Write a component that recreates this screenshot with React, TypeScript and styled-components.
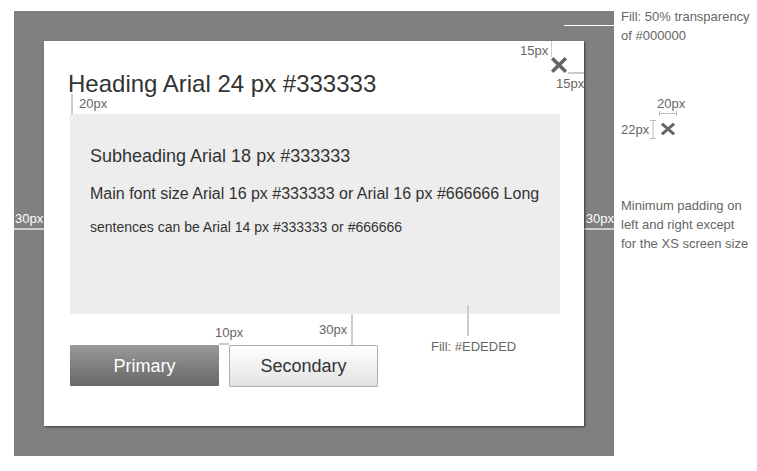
import React from "react";
import styled, { createGlobalStyle } from "styled-components";

const GlobalStyle = createGlobalStyle`
  html, body { margin: 0; padding: 0; background: #ffffff; }
  body { font-family: "Liberation Sans", Arial, sans-serif; }
`;

const Page = styled.div`
  display: flex;
  align-items: flex-start;
  padding: 7px 0 0 14px;
`;

const Overlay = styled.div`
  position: relative;
  margin-top: 4px;
  width: 600px;
  height: 445px;
  padding: 30px;
  box-sizing: border-box;
  background: #808080;
  flex-shrink: 0;
`;

const Modal = styled.div`
  position: relative;
  width: 540px;
  height: 385px;
  box-sizing: border-box;
  padding: 29px 24px 0 26px;
  background: #ffffff;
  box-shadow: 1px 1px 2px rgba(0, 0, 0, 0.55);
`;

const Heading = styled.h1`
  margin: 0 0 16px -2px;
  font-size: 24px;
  font-weight: normal;
  line-height: 28px;
  color: #333333;
`;

const ContentBox = styled.div`
  width: 490px;
  height: 200px;
  box-sizing: border-box;
  padding: 31px 20px 0 20px;
  background: #ededed;
`;

const Subheading = styled.h2`
  margin: 0;
  font-size: 18px;
  font-weight: normal;
  line-height: 22px;
  color: #333333;
`;

const MainText = styled.p`
  margin: 17px 0 0;
  font-size: 16px;
  line-height: 20px;
  color: #333333;
  white-space: nowrap;
`;

const SmallText = styled.p`
  margin: 15px 0 0;
  font-size: 14px;
  line-height: 17px;
  color: #333333;
  white-space: nowrap;
`;

const ButtonRow = styled.div`
  display: flex;
  align-items: flex-start;
  gap: 10px;
  margin-top: 31px;
`;

const Button = styled.button<{ $variant: "primary" | "secondary" }>`
  width: 149px;
  box-sizing: border-box;
  margin: 0;
  padding: 0;
  font-family: "Liberation Sans", Arial, sans-serif;
  font-size: 18px;
  line-height: 20px;
  border-radius: 1px;
  cursor: pointer;
  ${({ $variant }) =>
    $variant === "primary"
      ? `
    height: 41px;
    border: none;
    color: #ffffff;
    background: linear-gradient(to bottom, #9a9a9a 0%, #676767 100%);
  `
      : `
    height: 42px;
    border: 1px solid #b0b0b0;
    color: #333333;
    background: linear-gradient(to bottom, #ffffff 0%, #e2e2e2 100%);
  `}
`;

/* ---------- annotation markers laid over the mock-up ---------- */

const Marker = styled.div<{
  $top: number;
  $left: number;
  $dir?: "row" | "column";
  $align?: string;
  $gap?: number;
}>`
  position: absolute;
  top: ${({ $top }) => $top}px;
  left: ${({ $left }) => $left}px;
  display: flex;
  flex-direction: ${({ $dir }) => $dir ?? "row"};
  align-items: ${({ $align }) => $align ?? "flex-start"};
  gap: ${({ $gap }) => $gap ?? 0}px;
`;

const MarkLabel = styled.span<{ $light?: boolean; $offset?: number; $indent?: number }>`
  margin-top: ${({ $offset }) => $offset ?? 0}px;
  margin-left: ${({ $indent }) => $indent ?? 0}px;
  font-size: 13px;
  line-height: 15px;
  white-space: nowrap;
  color: ${({ $light }) => ($light ? "#ffffff" : "#666666")};
`;

const MarkLine = styled.div<{ $w: number; $h: number; $white?: boolean; $indent?: number }>`
  width: ${({ $w }) => $w}px;
  height: ${({ $h }) => $h}px;
  margin-left: ${({ $indent }) => $indent ?? 0}px;
  flex-shrink: 0;
  background: ${({ $white }) => ($white ? "#ffffff" : "#cccccc")};
`;

const CloseButton = styled.button`
  position: absolute;
  top: 15px;
  right: 16px;
  width: 18px;
  height: 18px;
  padding: 0;
  border: none;
  background: transparent;
  display: flex;
  cursor: pointer;
`;

/* ---------- notes column on the right ---------- */

const Notes = styled.div`
  display: flex;
  flex-direction: column;
  margin-left: 7px;
  font-size: 13px;
  line-height: 19px;
  color: #666666;
`;

const NoteText = styled.div<{ $mt?: number }>`
  margin-top: ${({ $mt }) => $mt ?? 0}px;
  white-space: nowrap;
`;

const CloseSpec = styled.div`
  display: grid;
  grid-template-columns: 28px 9px 20px;
  grid-template-rows: 15px 7px 22px;
  margin-top: 51px;
  font-size: 13px;
  line-height: 15px;
  color: #666666;
`;

const SpecWidthLabel = styled.span`
  grid-column: 3;
  grid-row: 1;
  margin-left: -1px;
  white-space: nowrap;
`;

const SpecHeightLabel = styled.span`
  grid-column: 1;
  grid-row: 3;
  align-self: center;
  white-space: nowrap;
`;

const SpecCell = styled.div<{ $col: number; $row: number }>`
  grid-column: ${({ $col }) => $col};
  grid-row: ${({ $row }) => $row};
  display: flex;
  align-items: center;
  justify-content: center;
`;

const XIcon = ({ w, h }: { w: number; h: number }) => (
  <svg width={w} height={h} viewBox="0 0 18 18" preserveAspectRatio="none">
    <path d="M2.2 2.2 L15.8 15.8 M15.8 2.2 L2.2 15.8" stroke="#666666" strokeWidth="3.6" fill="none" />
  </svg>
);

const HBracket = () => (
  <svg width="20" height="7" viewBox="0 0 20 7">
    <path d="M1.5 0 V5 M1.5 2.5 H18.5 M18.5 0 V5" stroke="#bbbbbb" strokeWidth="1" fill="none" />
  </svg>
);

const VBracket = () => (
  <svg width="9" height="22" viewBox="0 0 9 22">
    <path d="M1 2.5 H7 M4 2.5 V20.5 M1 20.5 H7" stroke="#bbbbbb" strokeWidth="1" fill="none" />
  </svg>
);

export default function App() {
  return (
    <>
      <GlobalStyle />
      <Page>
        <Overlay>
          <Marker $top={14} $left={550}>
            <MarkLine $w={50} $h={1} $white />
          </Marker>
          <Marker $top={200} $left={0} $dir="column" $gap={2}>
            <MarkLabel $light $indent={1}>30px</MarkLabel>
            <MarkLine $w={30} $h={2} />
          </Marker>
          <Marker $top={200} $left={570} $dir="column" $align="flex-end" $gap={2}>
            <MarkLabel $light>30px</MarkLabel>
            <MarkLine $w={30} $h={2} />
          </Marker>

          <Modal>
            <CloseButton aria-label="Close">
              <XIcon w={18} h={18} />
            </CloseButton>
            <Marker $top={0} $left={476} $gap={3}>
              <MarkLabel $offset={2}>15px</MarkLabel>
              <MarkLine $w={1} $h={16} />
            </Marker>
            <Marker $top={31} $left={512} $dir="column" $align="flex-end" $gap={2}>
              <MarkLine $w={16} $h={2} />
              <MarkLabel>15px</MarkLabel>
            </Marker>

            <Heading>Heading Arial 24 px #333333</Heading>
            <Marker $top={53} $left={27} $gap={6}>
              <MarkLine $w={2} $h={20} />
              <MarkLabel $offset={2}>20px</MarkLabel>
            </Marker>

            <ContentBox>
              <Subheading>Subheading Arial 18 px #333333</Subheading>
              <MainText>Main font size Arial 16 px #333333 or Arial 16 px #666666 Long</MainText>
              <SmallText>sentences can be Arial 14 px #333333 or #666666</SmallText>
            </ContentBox>

            <Marker $top={264} $left={387} $dir="column" $gap={3}>
              <MarkLine $w={2} $h={31} $indent={36} />
              <MarkLabel>Fill: #EDEDED</MarkLabel>
            </Marker>
            <Marker $top={273} $left={275} $gap={4}>
              <MarkLabel $offset={8}>30px</MarkLabel>
              <MarkLine $w={2} $h={31} />
            </Marker>
            <Marker $top={284} $left={171} $dir="column" $gap={3}>
              <MarkLabel>10px</MarkLabel>
              <MarkLine $w={10} $h={2} $indent={4} />
            </Marker>

            <ButtonRow>
              <Button $variant="primary">Primary</Button>
              <Button $variant="secondary">Secondary</Button>
            </ButtonRow>
          </Modal>
        </Overlay>
        <Notes>
          <NoteText>
            Fill: 50% transparency
            <br />
            of #000000
          </NoteText>
          <CloseSpec>
            <SpecWidthLabel>20px</SpecWidthLabel>
            <SpecCell $col={3} $row={2}>
              <HBracket />
            </SpecCell>
            <SpecHeightLabel>22px</SpecHeightLabel>
            <SpecCell $col={2} $row={3}>
              <VBracket />
            </SpecCell>
            <SpecCell $col={3} $row={3}>
              <XIcon w={16} h={14} />
            </SpecCell>
          </CloseSpec>
          <NoteText $mt={56}>
            Minimum padding on
            <br />
            left and right except
            <br />
            for the XS screen size
          </NoteText>
        </Notes>
      </Page>
    </>
  );
}
